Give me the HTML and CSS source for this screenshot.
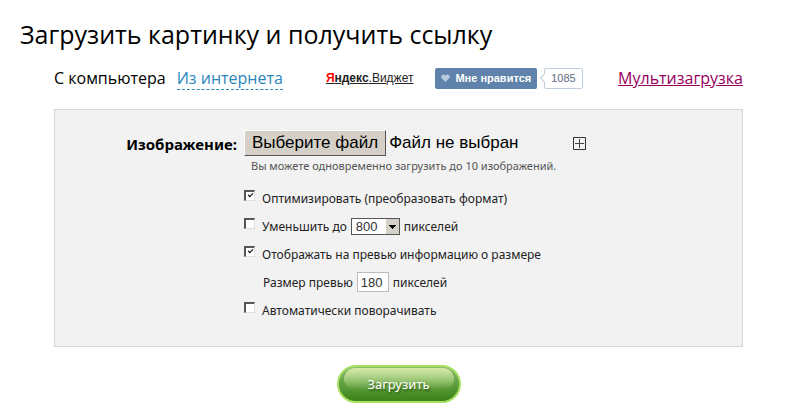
FILE: index.html
```html
<!DOCTYPE html>
<html lang="ru">
<head>
    <meta charset="UTF-8">
    <meta name="viewport" content="width=device-width, initial-scale=1.0">
    <title>Загрузить картинку и получить ссылку</title>
    <link rel="stylesheet" href="styles.css">
</head>
<body>
    <h1>Загрузить картинку и получить ссылку</h1>

    <form class="upload">
        <div class="tabs">
            <span class="tab-active">С компьютера</span>
            <a href="#internet" class="tab-link">Из интернета</a>
            <a href="#widget" class="widget"><b><i>Я</i>ндекс</b>.Виджет</a>
            <div class="like">
                <button type="button" class="like-button">
                    <svg width="9" height="8" viewBox="0 0 9 8"><path d="M4.5 8 L0.8 4.2 C-1 2 1.8 -1.2 4.5 1.3 C7.2 -1.2 10 2 8.2 4.2 Z" fill="#b9cbdf"/></svg>
                    Мне нравится
                </button>
                <span class="like-count">1085</span>
            </div>
            <a href="#multi" class="multi">Мультизагрузка</a>
        </div>

        <div class="panel">
            <label for="image" class="panel-label">Изображение:</label>
            <div class="fields">
                <div class="file-row">
                    <div class="file">
                        <span class="file-button">Выберите файл</span>
                        <span class="file-name">Файл не выбран</span>
                        <input type="file" id="image" name="image">
                    </div>
                    <button type="button" class="add" aria-label="Добавить">
                        <svg width="13" height="13" viewBox="0 0 13 13" fill="none"><path d="M.5 .5H12.5V12.5H.5Z" stroke="#333"/><path d="M6.5 2V11M2 6.5H11" stroke="#444"/></svg>
                    </button>
                </div>
                <p class="hint">Вы можете одновременно загрузить до 10 изображений.</p>

                <div class="option">
                    <input type="checkbox" id="optimize" checked>
                    <label for="optimize">Оптимизировать (преобразовать формат)</label>
                </div>
                <div class="option">
                    <input type="checkbox" id="reduce">
                    <label for="reduce">Уменьшить до</label>
                    <select aria-label="Размер в пикселях">
                        <option>800</option>
                    </select>
                    <span>пикселей</span>
                </div>
                <div class="option">
                    <input type="checkbox" id="info" checked>
                    <label for="info">Отображать на превью информацию о размере</label>
                </div>
                <div class="option option-sub">
                    <label for="preview">Размер превью</label>
                    <input type="text" id="preview" value="180">
                    <span>пикселей</span>
                </div>
                <div class="option">
                    <input type="checkbox" id="rotate">
                    <label for="rotate">Автоматически поворачивать</label>
                </div>
            </div>
        </div>

        <button type="submit" class="submit">Загрузить</button>
    </form>
</body>
</html>
```
FILE: styles.css
```css
body {
    margin: 0;
    background: #fff;
    color: #000;
    font-family: "Noto Sans", Tahoma, sans-serif;
    font-size: 12px;
}
h1 {
    margin: 16px 20px 0;
    font-family: "Open Sans", Tahoma, sans-serif;
    font-size: 25px;
    font-weight: normal;
    line-height: 36px;
}
button {
    font-family: inherit;
    cursor: pointer;
}
.upload {
    margin: 12px 57px 0 54px;
}
.tabs {
    display: flex;
    align-items: center;
    height: 28px;
    margin-bottom: 17px;
    font-family: "Open Sans", Tahoma, sans-serif;
    font-size: 16px;
    line-height: 22px;
    white-space: nowrap;
}
.tab-link {
    margin-left: 11px;
    color: #2a86bd;
    text-decoration: none;
    border-bottom: 1px dashed #2a86bd;
}
.widget {
    margin-left: 43px;
    color: #222;
    font-family: "Liberation Sans", Arial, sans-serif;
    font-size: 12px;
}
.widget i {
    color: #f00;
    font-style: normal;
}
.like {
    display: flex;
    margin-left: 22px;
    font-family: "Liberation Sans", Arial, sans-serif;
}
.like-button {
    display: flex;
    align-items: center;
    gap: 5px;
    height: 21px;
    padding: 0 6px;
    border: none;
    border-radius: 2px;
    background: #5f83aa;
    color: #fff;
    font-family: inherit;
    font-size: 11px;
    font-weight: bold;
}
.like-count {
    position: relative;
    margin-left: 7px;
    padding: 0 6px;
    border: 1px solid #c1cedb;
    border-radius: 2px;
    color: #5d6b7d;
    font-size: 11px;
    line-height: 19px;
}
.like-count::before {
    content: "";
    position: absolute;
    left: -4px;
    top: 6px;
    width: 5px;
    height: 5px;
    border: 1px solid #c1cedb;
    border-width: 0 0 1px 1px;
    background: #fff;
    transform: rotate(45deg);
}
.multi {
    margin-left: auto;
    color: #98005d;
}

.panel {
    display: flex;
    gap: 7px;
    padding: 20px 20px 22px 0;
    border: 1px solid #d6d6d6;
    background: #f2f2f2;
}
.panel-label {
    width: 182px;
    font-size: 15px;
    font-weight: bold;
    line-height: 28px;
    text-align: right;
}
.file-row {
    display: flex;
    align-items: center;
    gap: 54px;
}
.file {
    position: relative;
    display: flex;
    align-items: center;
    gap: 3px;
    font-family: "Liberation Sans", Arial, sans-serif;
    font-size: 17px;
    line-height: 24px;
}
.file-button {
    padding: 0 7px;
    border: 1px solid;
    border-color: #fff #555 #555 #fff;
    background: #d4d0c8;
}
.file input {
    position: absolute;
    inset: 0;
    width: 100%;
    opacity: 0;
    cursor: pointer;
}
.add {
    display: flex;
    padding: 0;
    border: none;
    background: none;
}
.hint {
    margin: 2px 0 10px 7px;
    color: #555;
    font-size: 11px;
    line-height: 16px;
}
.option {
    display: flex;
    align-items: center;
    gap: 4px;
    height: 28px;
    color: #222;
}
.option-sub {
    padding-left: 19px;
}
.option input[type="checkbox"] {
    appearance: none;
    width: 11px;
    height: 11px;
    margin: 0 3px 5px 0;
    border: 1px solid;
    border-width: 2px 1px 1px 2px;
    border-color: #555 #ddd #ddd #555;
    background: #fff;
}
.option input[type="checkbox"]:checked::before {
    content: "";
    display: block;
    width: 2px;
    height: 4px;
    margin: 0 3px;
    border: solid #000;
    border-width: 0 1px 1px 0;
    transform: rotate(45deg);
}
.option select {
    appearance: none;
    width: 49px;
    height: 17px;
    padding: 0 4px;
    border: 1px solid #555;
    border-radius: 0;
    background:
        linear-gradient(#000, #000) 37px 6px / 7px 1px no-repeat,
        linear-gradient(#000, #000) 38px 7px / 5px 1px no-repeat,
        linear-gradient(#000, #000) 39px 8px / 3px 1px no-repeat,
        linear-gradient(#000, #000) 40px 9px / 1px 1px no-repeat,
        linear-gradient(#d4d0c8, #d4d0c8) right / 13px 100% no-repeat,
        #fff;
    color: #333;
    font: 13px "Liberation Sans", Arial, sans-serif;
}
.option input[type="text"] {
    box-sizing: border-box;
    width: 32px;
    height: 20px;
    padding: 0 3px;
    border: 1px solid #bbb;
    background: #fff;
    color: #333;
    font: 13px "Liberation Sans", Arial, sans-serif;
}

.submit {
    position: relative;
    z-index: 0;
    display: block;
    width: 124px;
    height: 38px;
    margin: 18px auto 0;
    border: 2px solid #a7e060;
    border-radius: 19px;
    background: linear-gradient(#8bbb72, #5f9f3f 50%, #3b8217);
    color: #fff;
    font-size: 13px;
    text-shadow: 1px 2px 2px #2d5b14;
}
/* gloss on the upper half */
.submit::before {
    content: "";
    position: absolute;
    z-index: -1;
    inset: 1px 5px 11px;
    border-radius: 12px;
    background: linear-gradient(#d3e9a5, rgba(170, 210, 120, 0));
}
```
